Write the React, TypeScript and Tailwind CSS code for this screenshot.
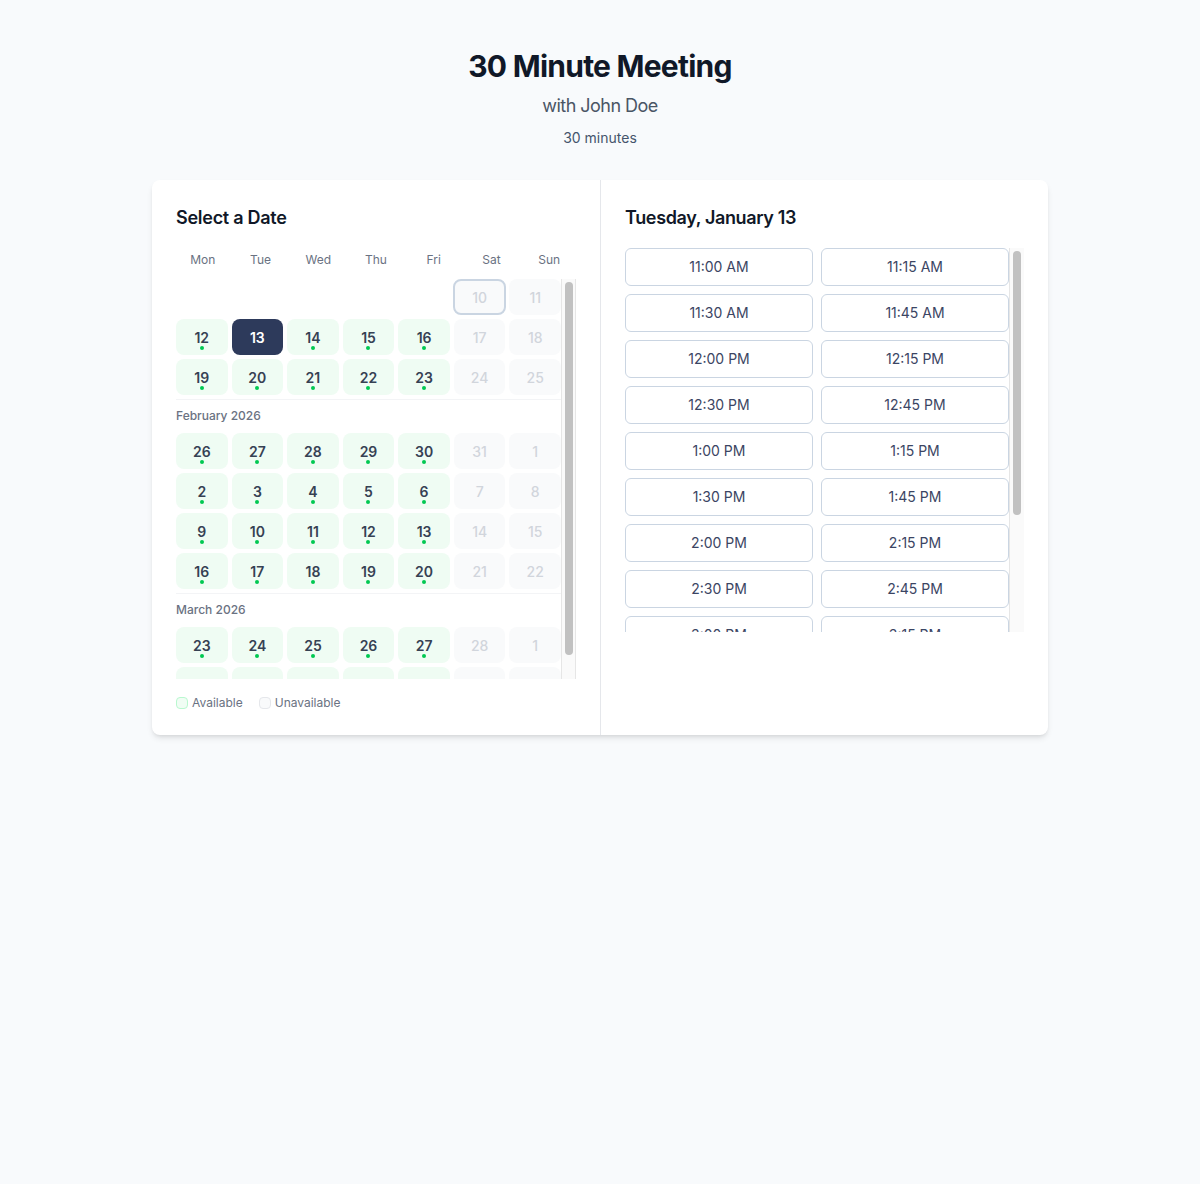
import React from "react";

type Day = {
  n: number | null;
  avail: boolean;
  selected?: boolean;
  today?: boolean;
};

type Row =
  | { kind: "month"; label: string }
  | { kind: "week"; days: Day[] };

// Mon-Fri are bookable, weekends never are
const week = (nums: number[], selected?: number): Row => ({
  kind: "week",
  days: nums.map((n, i) => ({ n, avail: i < 5, selected: n === selected })),
});

const rows: Row[] = [
  {
    kind: "week",
    days: [
      { n: null, avail: false },
      { n: null, avail: false },
      { n: null, avail: false },
      { n: null, avail: false },
      { n: null, avail: false },
      { n: 10, avail: false, today: true },
      { n: 11, avail: false },
    ],
  },
  week([12, 13, 14, 15, 16, 17, 18], 13),
  week([19, 20, 21, 22, 23, 24, 25]),
  { kind: "month", label: "February 2026" },
  week([26, 27, 28, 29, 30, 31, 1]),
  week([2, 3, 4, 5, 6, 7, 8]),
  week([9, 10, 11, 12, 13, 14, 15]),
  week([16, 17, 18, 19, 20, 21, 22]),
  { kind: "month", label: "March 2026" },
  week([23, 24, 25, 26, 27, 28, 1]),
  week([2, 3, 4, 5, 6, 7, 8]),
];

const weekdays = ["Mon", "Tue", "Wed", "Thu", "Fri", "Sat", "Sun"];

const slots: string[] = [
  "11:00 AM", "11:15 AM", "11:30 AM", "11:45 AM",
  "12:00 PM", "12:15 PM", "12:30 PM", "12:45 PM",
  "1:00 PM", "1:15 PM", "1:30 PM", "1:45 PM",
  "2:00 PM", "2:15 PM", "2:30 PM", "2:45 PM",
  "3:00 PM", "3:15 PM", "3:30 PM", "3:45 PM",
  "4:00 PM", "4:15 PM", "4:30 PM", "4:45 PM",
];

// The browser hides native scrollbars, so draw the classic one next to the list
const ScrollTrack = ({ thumb, right }: { thumb: string; right?: boolean }) => (
  <div
    className={`w-[15px] shrink-0 bg-[#fafafa] border-l border-[#e6e6e6] pt-[3px] flex justify-center ${
      right ? "border-r" : ""
    }`}
  >
    <div className={`w-2 rounded-full bg-[#c1c1c1] ${thumb}`} />
  </div>
);

const DayCell = ({ day }: { day: Day }) => {
  if (day.n === null) return <div className="h-9" />;

  if (day.selected) {
    return (
      <button className="h-9 pt-0.5 rounded-lg bg-[#2d3a5b] text-white text-sm font-semibold flex items-center justify-center">
        {day.n}
      </button>
    );
  }

  if (!day.avail) {
    return (
      <div
        className={`h-9 pt-0.5 rounded-lg bg-gray-50 text-gray-300 text-sm font-medium flex items-center justify-center ${
          day.today ? "border-2 border-slate-300 -mx-px" : ""
        }`}
      >
        {day.n}
      </div>
    );
  }

  return (
    <button className="relative h-9 pt-0.5 rounded-lg bg-[#effcf3] text-gray-700 text-sm font-semibold flex items-center justify-center">
      {day.n}
      <span className="absolute bottom-[5px] left-1/2 -translate-x-1/2 w-1 h-1 rounded-full bg-green-500" />
    </button>
  );
};

export default function App() {
  return (
    <div className="min-h-screen bg-slate-50 font-['Inter',sans-serif] pt-12">
      <div className="text-center">
        <h1 className="text-3xl font-bold tracking-tight text-gray-900">30 Minute Meeting</h1>
        <p className="mt-2 text-lg tracking-[-0.03em] text-gray-600">with John Doe</p>
        <p className="mt-2 text-sm text-slate-600">30 minutes</p>
      </div>

      <div className="mx-auto mt-8 w-[896px] flex bg-white rounded-lg shadow-md">
        {/* Date picker */}
        <div className="w-1/2 p-6">
          <h2 className="text-lg font-semibold tracking-[-0.015em] text-gray-900 mb-5">Select a Date</h2>
          <div className="grid grid-cols-7 gap-1 mb-[11px]">
            {weekdays.map((d) => (
              <div key={d} className="text-center text-xs text-gray-500">
                {d}
              </div>
            ))}
          </div>
          <div className="h-[400px] flex">
            <div className="flex-1 min-w-0 overflow-y-auto [scrollbar-width:none] flex flex-col gap-1">
              {rows.map((row, i) =>
                row.kind === "month" ? (
                  <div
                    key={i}
                    className="border-t border-gray-100 pt-2 pb-[5px] shrink-0 text-xs font-medium text-gray-500"
                  >
                    {row.label}
                  </div>
                ) : (
                  <div key={i} className="grid grid-cols-7 gap-1 shrink-0">
                    {row.days.map((d, j) => (
                      <DayCell key={j} day={d} />
                    ))}
                  </div>
                )
              )}
            </div>
            <ScrollTrack thumb="h-[373px]" right />
          </div>
          <div className="mt-4 flex items-center gap-4 text-xs text-gray-500">
            <div className="flex items-center gap-1">
              <span className="w-3 h-3 rounded-sm border border-green-200 bg-green-50" />
              Available
            </div>
            <div className="flex items-center gap-1">
              <span className="w-3 h-3 rounded-sm border border-gray-200 bg-gray-50" />
              Unavailable
            </div>
          </div>
        </div>

        {/* Time slots */}
        <div className="w-1/2 p-6 border-l border-gray-200">
          <h2 className="text-lg font-semibold tracking-[-0.02em] text-gray-900 mb-4">Tuesday, January 13</h2>
          <div className="h-[384px] flex">
            <div className="flex-1 min-w-0 overflow-y-auto [scrollbar-width:none]">
              <div className="grid grid-cols-2 gap-2">
                {slots.map((s) => (
                  <button
                    key={s}
                    className="h-[38px] rounded-md border border-slate-300 bg-white text-sm text-[#3b4563]"
                  >
                    {s}
                  </button>
                ))}
              </div>
            </div>
            <ScrollTrack thumb="h-[264px]" />
          </div>
        </div>
      </div>
    </div>
  );
}
